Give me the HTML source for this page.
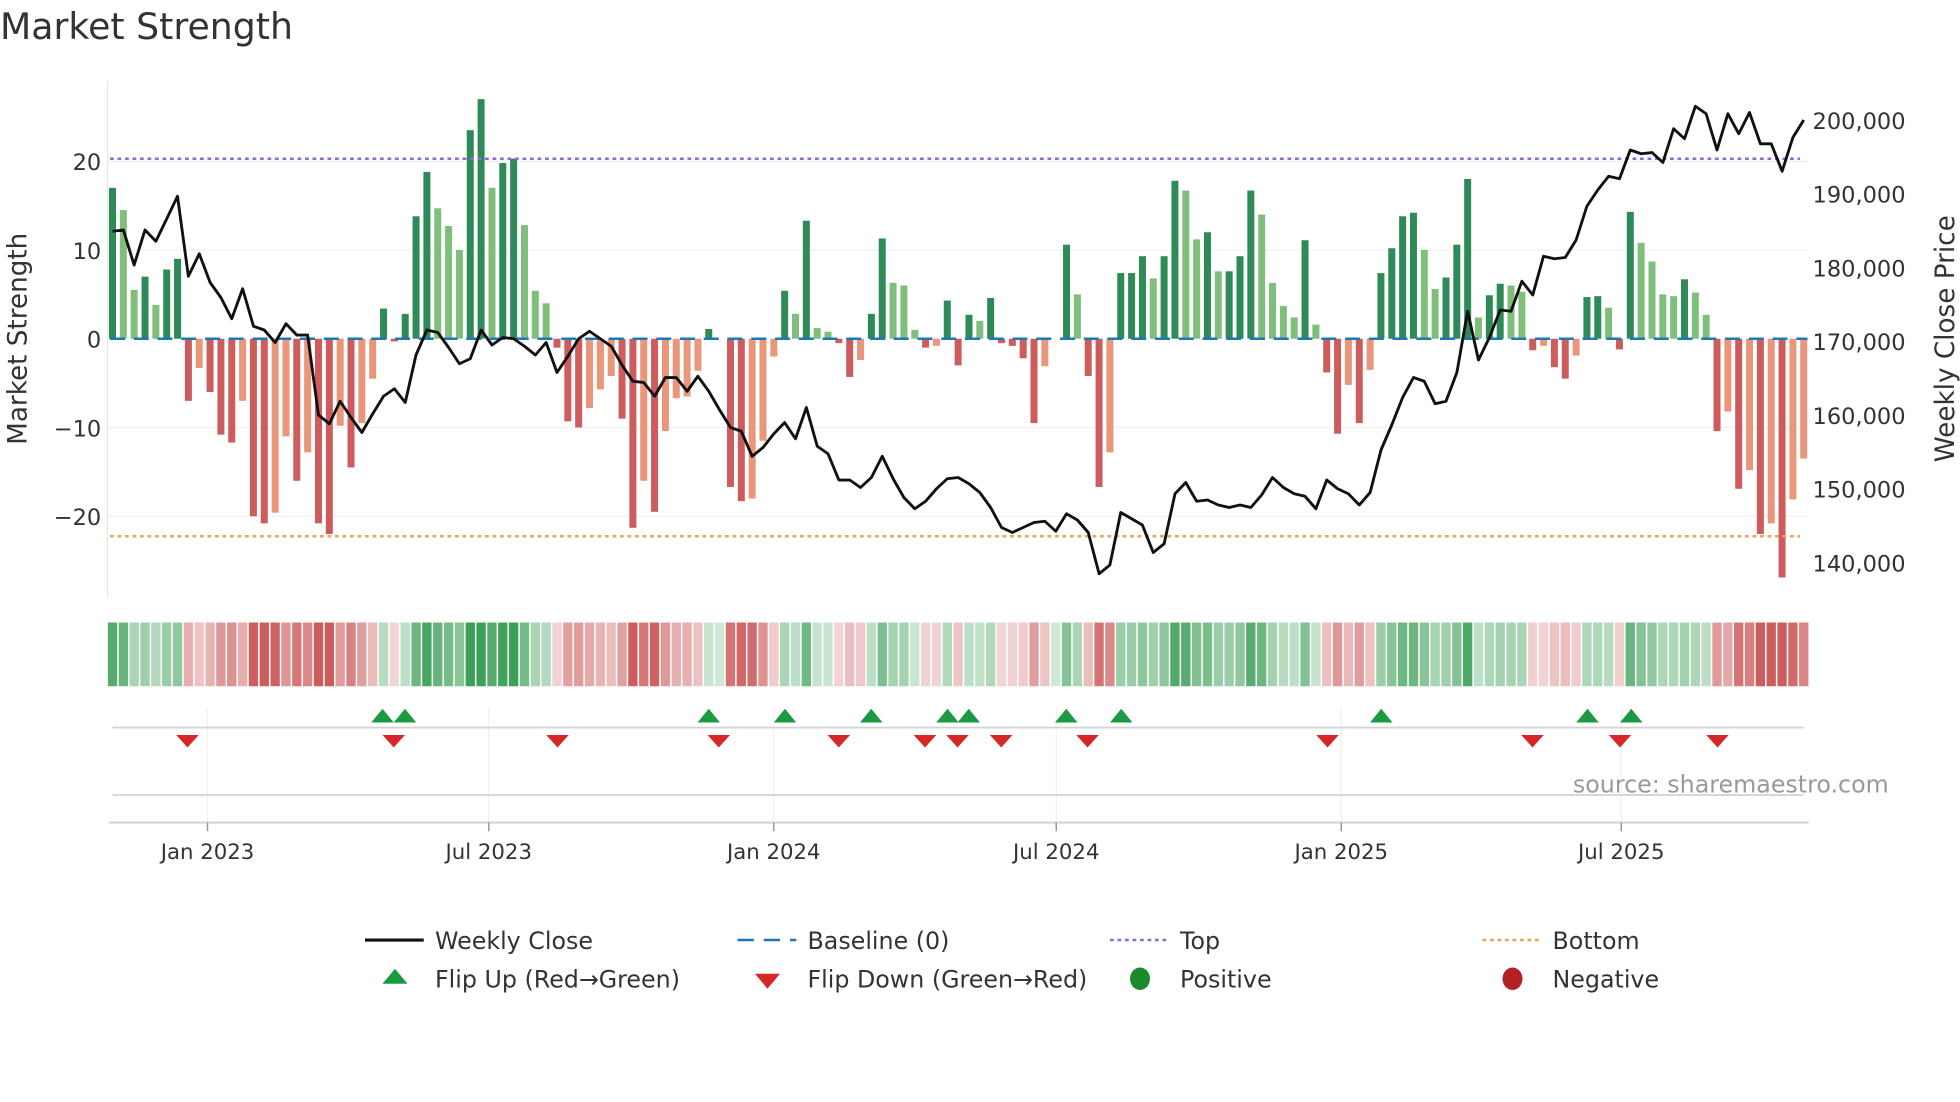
<!DOCTYPE html>
<html><head><meta charset="utf-8"><style>
html,body{margin:0;padding:0;background:#fff;}
svg{display:block;font-family:"DejaVu Sans","Liberation Sans",sans-serif;}
</style></head><body>
<svg id="s" width="1960" height="1102" viewBox="0 0 1568 881.6" xmlns="http://www.w3.org/2000/svg">
<rect width="1568" height="882" fill="#fff"/>
<text x="0" y="31" font-size="29" fill="#333">Market Strength</text>
<g id="grid" stroke="#eef0f4" stroke-width="1">
<line x1="86" y1="129" x2="1446" y2="129"/><line x1="86" y1="200" x2="1446" y2="200"/>
<line x1="86" y1="342" x2="1446" y2="342"/><line x1="86" y1="413" x2="1446" y2="413"/>
<line x1="86" y1="65" x2="86" y2="478" stroke="#e8e8ec"/>
</g>
<g id="bars"></g>
<line x1="88" y1="271" x2="1446" y2="271" stroke="#1f77b4" stroke-width="2" stroke-dasharray="12 7"/>
<line x1="88" y1="127" x2="1440" y2="127" stroke="#9467d9" stroke-width="2" stroke-dasharray="3 3"/>
<line x1="88" y1="429" x2="1440" y2="429" stroke="#f0a05a" stroke-width="2" stroke-dasharray="3 3"/>
<polyline id="price" fill="none" stroke="#111" stroke-width="2.3" stroke-linejoin="round"/>
<g font-size="18" fill="#333" text-anchor="end">
<text x="81" y="136">20</text><text x="81" y="207">10</text><text x="81" y="278">0</text>
<text x="81" y="349">−10</text><text x="81" y="420">−20</text>
</g>
<g font-size="18" fill="#333">
<text x="1450" y="103">200,000</text><text x="1450" y="162">190,000</text><text x="1450" y="221">180,000</text>
<text x="1450" y="280">170,000</text><text x="1450" y="339">160,000</text><text x="1450" y="398">150,000</text>
<text x="1450" y="457">140,000</text>
</g>
<text transform="translate(21,271) rotate(-90)" font-size="21" fill="#333" text-anchor="middle">Market Strength</text>
<text transform="translate(1563,271) rotate(-90)" font-size="21" fill="#333" text-anchor="middle">Weekly Close Price</text>
<g id="heat"></g>
<g stroke="#eef0f4" stroke-width="1">
<line x1="166" y1="566" x2="166" y2="658"/><line x1="391" y1="566" x2="391" y2="658"/>
<line x1="619" y1="566" x2="619" y2="658"/><line x1="845" y1="566" x2="845" y2="658"/>
<line x1="1073" y1="566" x2="1073" y2="658"/><line x1="1297" y1="566" x2="1297" y2="658"/>
</g>
<line x1="90" y1="582" x2="1443" y2="582" stroke="#d4d4d4" stroke-width="1.5"/>
<line x1="90" y1="636" x2="1443" y2="636" stroke="#d4d4d4" stroke-width="1.5"/>
<line x1="87" y1="658" x2="1447" y2="658" stroke="#d0d0d0" stroke-width="1.5"/>
<g stroke="#999" stroke-width="1.2">
<line x1="166" y1="658" x2="166" y2="665"/><line x1="391" y1="658" x2="391" y2="665"/>
<line x1="619" y1="658" x2="619" y2="665"/><line x1="845" y1="658" x2="845" y2="665"/>
<line x1="1073" y1="658" x2="1073" y2="665"/><line x1="1297" y1="658" x2="1297" y2="665"/>
</g>
<g id="marks"></g>
<text x="1511" y="634" font-size="19" fill="#999" text-anchor="end">source: sharemaestro.com</text>
<g font-size="17" fill="#333" text-anchor="middle">
<text x="166" y="687">Jan 2023</text><text x="391" y="687">Jul 2023</text><text x="619" y="687">Jan 2024</text>
<text x="845" y="687">Jul 2024</text><text x="1073" y="687">Jan 2025</text><text x="1297" y="687">Jul 2025</text>
</g>
<g font-size="19" fill="#333">
<line x1="292" y1="752" x2="339" y2="752" stroke="#111" stroke-width="2.5"/>
<text x="348" y="759">Weekly Close</text>
<line x1="590" y1="752" x2="637" y2="752" stroke="#1f77b4" stroke-width="2" stroke-dasharray="13 8"/>
<text x="646" y="759">Baseline (0)</text>
<line x1="888" y1="752" x2="935" y2="752" stroke="#9467d9" stroke-width="2" stroke-dasharray="3 3"/>
<text x="944" y="759">Top</text>
<line x1="1186" y1="752" x2="1233" y2="752" stroke="#f0a05a" stroke-width="2" stroke-dasharray="3 3"/>
<text x="1242" y="759">Bottom</text>
<polygon points="306,787 326,787 316,775" fill="#1a9a41"/>
<text x="348" y="790">Flip Up (Red→Green)</text>
<polygon points="604,779 624,779 614,791" fill="#d62728"/>
<text x="646" y="790">Flip Down (Green→Red)</text>
<ellipse cx="912" cy="783" rx="8" ry="9" fill="#1a8a2a"/>
<text x="944" y="790">Positive</text>
<ellipse cx="1210" cy="783" rx="8" ry="9" fill="#b22222"/>
<text x="1242" y="790">Negative</text>
</g>
</svg>
<script>
var v=[17,14.5,5.5,7,3.8,7.8,9,-7,-3.3,-6,-10.8,-11.7,-7,-20,-20.8,-19.6,-11,-16,-12.8,-20.8,-22,-9.8,-14.5,-9.5,-4.5,3.4,-0.3,2.8,13.8,18.8,14.7,12.7,10,23.5,27,17,19.8,20.3,12.8,5.4,4,-1,-9.3,-10,-7.8,-5.7,-4.2,-9,-21.3,-16,-19.5,-10.4,-6.7,-6.5,-3.6,1.1,0,-16.7,-18.3,-18,-11.5,-2,5.4,2.8,13.3,1.2,0.8,-0.5,-4.3,-2.4,2.8,11.3,6.3,6,1,-1,-0.8,4.3,-3,2.7,2,4.6,-0.5,-0.8,-2.2,-9.5,-3.1,0,10.6,5,-4.2,-16.7,-12.8,7.4,7.4,9.3,6.8,9.3,17.8,16.7,11.2,12,7.6,7.6,9.3,16.7,14,6.3,3.7,2.4,11.1,1.6,-3.8,-10.7,-5.2,-9.5,-3.5,7.4,10.2,13.8,14.2,10,5.6,6.9,10.6,18,2.4,4.9,6.2,6,5.3,-1.3,-0.8,-3.2,-4.5,-1.9,4.7,4.8,3.5,-1.2,14.3,10.8,8.7,5,4.8,6.7,5.2,2.7,-10.4,-8.2,-16.9,-14.8,-22,-20.8,-26.9,-18.1,-13.5];
var p=[185,184,212,184,193,175,157,221,203,226,238,255,231,261,264,274,259,268,268,332,339,321,334,346,331,317,311,322,284,264,266,278,291,287,264,276,270,271,277,284,274,298,285,271,265,271,277,292,305,306,317,302,302,313,301,313,328,342,345,365,358,347,338,351,326,357,363,384,384,390,382,365,383,398,407,401,391,383,382,387,394,406,422,426,422,418,417,425,411,416,426,459,452,410,415,420,442,435,395,386,401,400,404,406,404,406,396,382,390,395,397,407,384,391,395,404,394,360,340,318,302,305,323,321,298,249,288,270,248,249,225,236,205,207,206,192,165,152,141,143,120,123,122,130,103,111,85,91,120,91,107,90,115,115,137,110,96];
var NS="http://www.w3.org/2000/svg",n=v.length,st=(1443-90)/(n-1);
function el(t,a,par){var e=document.createElementNS(NS,t);for(var k in a)e.setAttribute(k,a[k]);document.getElementById(par).appendChild(e);}
var pts=[];
for(var i=0;i<n;i++){
 var x=90+st*i,val=v[i],prev=i?v[i-1]:0;
 var h=Math.abs(val)*7.1,y=val>=0?271-h:271;
 var c;
 if(val>=0)c=(val>=prev)?"#2e8b57":"#7fbf7b";else c=(val<=prev)?"#cd5c5c":"#e9967a";
 if(Math.abs(val)>0.05)el("rect",{x:x-2.8,y:y,width:5.6,height:Math.max(h,1),fill:c},"bars");
 var a=Math.min(0.9,0.22+Math.abs(val)/30);
 var hc=val>=0?"rgba(40,150,70,"+a.toFixed(2)+")":"rgba(200,75,75,"+a.toFixed(2)+")";
 el("rect",{x:x-st/2+0.6,y:498,width:st-1.2,height:51,fill:hc},"heat");
 if(i<p.length)pts.push(x.toFixed(1)+","+p[i]);
}
document.getElementById("price").setAttribute("points",pts.join(" "));
[306,324,567,628,697,758,775,853,897,1105,1270,1305].forEach(function(x){el("polygon",{points:(x-9)+",578 "+(x+9)+",578 "+x+",567",fill:"#1a9a41"},"marks");});
[150,315,446,575,671,740,766,801,870,1062,1226,1296,1374].forEach(function(x){el("polygon",{points:(x-9)+",588 "+(x+9)+",588 "+x+",598",fill:"#d62728"},"marks");});
</script>
</body></html>
